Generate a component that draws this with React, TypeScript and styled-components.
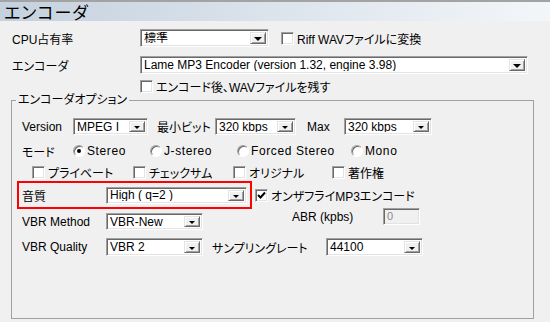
import React from 'react'
import styled, { createGlobalStyle } from 'styled-components'

const GlobalStyle = createGlobalStyle`
  html, body {
    margin: 0;
    padding: 0;
    background: #f0f0f0;
  }
  body {
    font-family: "Liberation Sans", "Noto Sans CJK JP", sans-serif;
    font-size: 12px;
    font-feature-settings: "palt" 1;
    color: #000;
  }
`

const Page = styled.div`
  width: 550px;
  height: 322px;
  overflow: hidden;
  background: #f0f0f0;
  display: flex;
  flex-direction: column;
`
const Header = styled.div`
  height: 19px;
  border-top: 2px solid #a3a3a3;
  background: linear-gradient(to right, #c4d1de, #f3f6f9);
  padding-left: 4px;
  display: flex;
  align-items: center;
  font-family: "Noto Sans CJK JP", sans-serif;
  font-size: 17px;
  line-height: 19px;
  letter-spacing: 1px;
`
const Body = styled.div`
  padding: 8px 0 0 12px;
  display: flex;
  flex-direction: column;
`
const Row = styled.div<{ $h: number; $mt?: number; $ml?: number }>`
  display: flex;
  align-items: center;
  height: ${p => p.$h}px;
  margin-top: ${p => p.$mt ?? 0}px;
  margin-left: ${p => p.$ml ?? 0}px;
  white-space: nowrap;
`
const Label = styled.span<{ $w?: number; $ml?: number }>`
  width: ${p => (p.$w ? `${p.$w}px` : 'auto')};
  margin-left: ${p => p.$ml ?? 0}px;
  flex-shrink: 0;
  white-space: nowrap;
`
const SelectBox = styled.div<{ $w: number; $h: number; $ml?: number }>`
  box-sizing: border-box;
  width: ${p => p.$w}px;
  height: ${p => p.$h}px;
  margin-left: ${p => p.$ml ?? 0}px;
  flex-shrink: 0;
  display: flex;
  align-items: stretch;
  background: #fff;
  border: 1px solid;
  border-color: #a0a0a0 #fff #fff #a0a0a0;
  box-shadow: inset 1px 1px 0 #696969, inset -1px -1px 0 #e3e3e3;
  padding: 2px 2px 2px 3px;
`
const SelectText = styled.span`
  flex: 1;
  overflow: hidden;
  white-space: nowrap;
  line-height: 12px;
  display: flex;
  align-items: center;
`
const DropButton = styled.span`
  box-sizing: border-box;
  width: 16px;
  flex-shrink: 0;
  background: #f0f0f0;
  border: 1px solid;
  border-color: #e3e3e3 #696969 #696969 #e3e3e3;
  box-shadow: inset 1px 1px 0 #fff, inset -1px -1px 0 #a0a0a0;
  display: flex;
  align-items: center;
  justify-content: center;
`
const Arrow = styled.span<{ $big?: boolean }>`
  width: 0;
  height: 0;
  margin-top: ${p => (p.$big ? 1 : 2)}px;
  border-left: ${p => (p.$big ? 4 : 3)}px solid transparent;
  border-right: ${p => (p.$big ? 4 : 3)}px solid transparent;
  border-top: ${p => (p.$big ? 4 : 3)}px solid #000;
`
const Check = styled.span<{ $ml?: number }>`
  box-sizing: border-box;
  width: 13px;
  height: 13px;
  margin-left: ${p => p.$ml ?? 0}px;
  flex-shrink: 0;
  background: #fff;
  border: 1px solid;
  border-color: #a0a0a0 #fff #fff #a0a0a0;
  box-shadow: inset 1px 1px 0 #696969, inset -1px -1px 0 #e3e3e3;
  display: flex;
  align-items: center;
  justify-content: center;
`
const CheckItem = styled.span<{ $w?: number; $ml?: number }>`
  display: flex;
  align-items: center;
  gap: 3px;
  width: ${p => (p.$w ? `${p.$w}px` : 'auto')};
  margin-left: ${p => p.$ml ?? 0}px;
  flex-shrink: 0;
`
const Radio = styled.span`
  box-sizing: border-box;
  width: 12px;
  height: 12px;
  border-radius: 50%;
  background: #fff;
  border: 1px solid;
  border-color: #a0a0a0 #fff #fff #a0a0a0;
  box-shadow: inset 1px 1px 0 #696969;
  display: flex;
  align-items: center;
  justify-content: center;
  flex-shrink: 0;
`
const RadioDot = styled.span`
  width: 4px;
  height: 4px;
  border-radius: 50%;
  background: #000;
`
const RadioItem = styled.span<{ $w?: number }>`
  display: flex;
  align-items: center;
  gap: 2px;
  width: ${p => (p.$w ? `${p.$w}px` : 'auto')};
  flex-shrink: 0;
  letter-spacing: 0.6px;
`
const Group = styled.fieldset`
  box-sizing: border-box;
  width: 523px;
  height: 226px;
  margin: 0 0 0 -1px;
  padding: 11px 0 0 10px;
  border: 1px solid #a0a0a0;
  display: flex;
  flex-direction: column;
`
const GroupTitle = styled.legend`
  margin-left: -6px;
  padding: 0 2px;
  line-height: 14px;
`
const Highlight = styled.div`
  box-sizing: border-box;
  width: 235px;
  height: 28px;
  margin-left: -5px;
  border: 2px solid #f00;
  padding-left: 3px;
  display: flex;
  align-items: center;
  flex-shrink: 0;
`
const AbrGroup = styled.div`
  display: flex;
  align-items: center;
  align-self: flex-start;
  margin-top: -5px;
  margin-left: 89px;
  height: 17px;
`
const DisabledInput = styled.span`
  box-sizing: border-box;
  width: 37px;
  height: 17px;
  background: #f0f0f0;
  border: 1px solid;
  border-color: #a0a0a0 #fff #fff #a0a0a0;
  box-shadow: inset 1px 1px 0 #696969, inset -1px -1px 0 #e3e3e3;
  padding: 1px 3px;
  color: #8a8a8a;
  font-size: 11px;
  line-height: 13px;
`

const Select: React.FC<{ value: string; w: number; h?: number; ml?: number; big?: boolean }> = ({
  value,
  w,
  h = 17,
  ml,
  big
}) => (
  <SelectBox $w={w} $h={h} $ml={ml}>
    <SelectText>{value}</SelectText>
    <DropButton>
      <Arrow $big={big} />
    </DropButton>
  </SelectBox>
)

const CheckBox: React.FC<{ checked?: boolean; ml?: number }> = ({ checked, ml }) => (
  <Check $ml={ml}>
    {checked && (
      <svg width="9" height="9" viewBox="0 0 9 9">
        <path d="M1 4 L3.5 6.5 L8 1.5" stroke="#000" strokeWidth="2" fill="none" />
      </svg>
    )}
  </Check>
)

const modes = [
  { name: 'Stereo', w: 77, on: true },
  { name: 'J-stereo', w: 87 },
  { name: 'Forced Stereo', w: 114 },
  { name: 'Mono', w: 60 }
]
const flags = [
  { name: 'プライベート', w: 101 },
  { name: 'チェックサム', w: 100 },
  { name: 'オリジナル', w: 99 },
  { name: '著作権', w: 80 }
]

const App: React.FC = () => {
  return (
    <Page>
      <GlobalStyle />
      <Header>エンコーダ</Header>
      <Body>
        <Row $h={18}>
          <Label $w={128}>CPU占有率</Label>
          <Select value="標準" w={129} h={18} big />
          <CheckItem $ml={12}>
            <CheckBox />
            <span>Riff WAVファイルに変換</span>
          </CheckItem>
        </Row>
        <Row $h={18} $mt={9}>
          <Label $w={128}>エンコーダ</Label>
          <Select value="Lame MP3 Encoder (version 1.32, engine 3.98)" w={388} h={18} big />
        </Row>
        <Row $h={14} $mt={5} $ml={128}>
          <CheckItem>
            <CheckBox />
            <span>エンコード後、WAVファイルを残す</span>
          </CheckItem>
        </Row>

        <Group>
          <GroupTitle>エンコーダオプション</GroupTitle>
          <Row $h={17}>
            <Label $w={51}>Version</Label>
            <Select value="MPEG I" w={75} />
            <Label $w={58} $ml={9}>最小ビット</Label>
            <Select value="320 kbps" w={81} />
            <Label $w={37} $ml={11}>Max</Label>
            <Select value="320 kbps" w={88} />
          </Row>
          <Row $h={16} $mt={8}>
            <Label $w={51}>モード</Label>
            {modes.map(m => (
              <RadioItem key={m.name} $w={m.w}>
                <Radio>{m.on && <RadioDot />}</Radio>
                <span>{m.name}</span>
              </RadioItem>
            ))}
          </Row>
          <Row $h={14} $mt={6} $ml={10}>
            {flags.map(f => (
              <CheckItem key={f.name} $w={f.w}>
                <CheckBox />
                <span>{f.name}</span>
              </CheckItem>
            ))}
          </Row>
          <Row $h={28} $mt={2}>
            <Highlight>
              <Label $w={84}>音質</Label>
              <Select value="High ( q=2 )" w={141} />
            </Highlight>
            <CheckItem $ml={3}>
              <CheckBox checked />
              <span>オンザフライMP3エンコード</span>
            </CheckItem>
          </Row>
          <Row $h={17} $mt={4}>
            <Label $w={84}>VBR Method</Label>
            <Select value="VBR-New" w={97} />
            <AbrGroup>
              <Label $w={91}>ABR (kpbs)</Label>
              <DisabledInput>0</DisabledInput>
            </AbrGroup>
          </Row>
          <Row $h={18} $mt={8}>
            <Label $w={84}>VBR Quality</Label>
            <Select value="VBR 2" w={97} h={18} />
            <Label $w={114} $ml={9}>サンプリングレート</Label>
            <Select value="44100" w={97} h={18} />
          </Row>
        </Group>
      </Body>
    </Page>
  )
}

export default App
